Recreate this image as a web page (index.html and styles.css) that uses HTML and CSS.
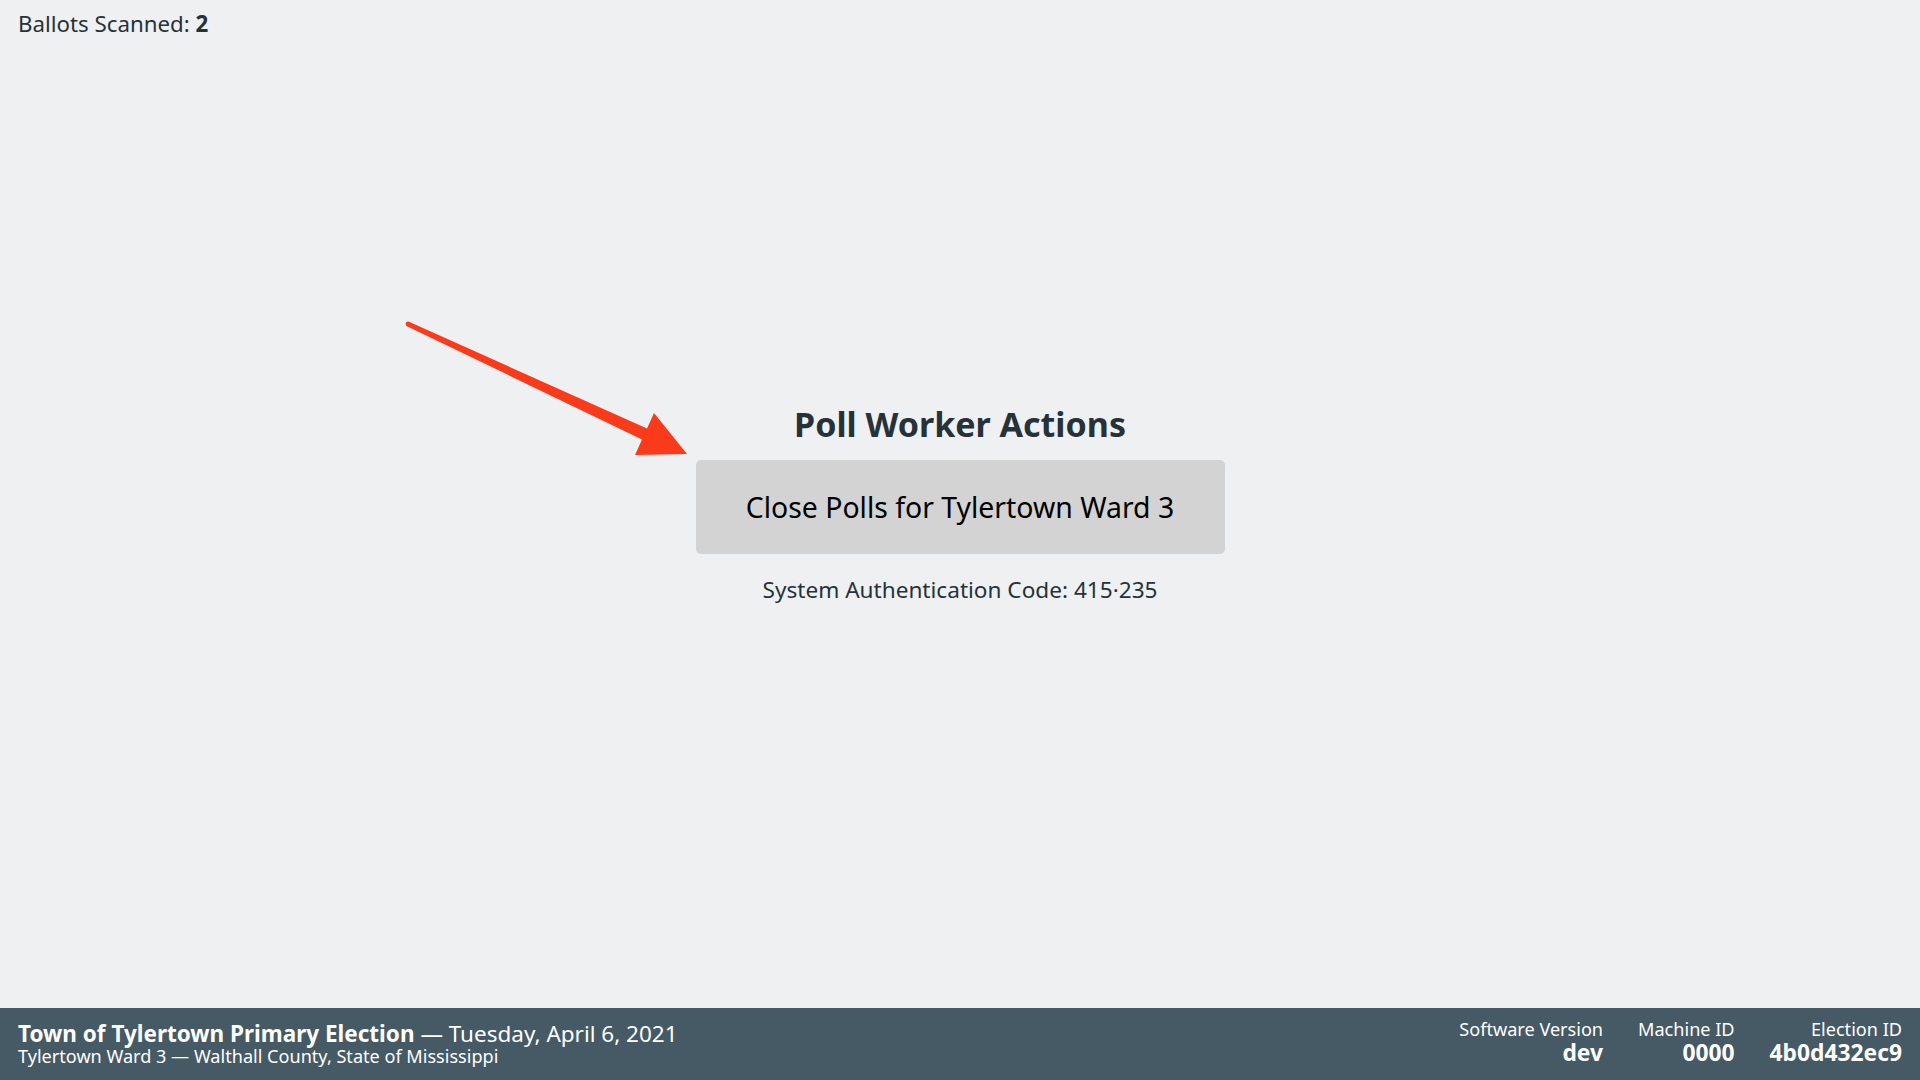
FILE: index.html
```html
<!DOCTYPE html>
<html lang="en">
<head>
<meta charset="utf-8">
<title>Poll Worker Actions</title>
<link rel="stylesheet" href="styles.css">
</head>
<body>
<div class="app">
  <main class="main">
    <div class="status">Ballots Scanned: <strong>2</strong></div>
    <section class="center">
      <h1 class="title">Poll Worker Actions</h1>
      <button class="btn" type="button">Close Polls for Tylertown Ward 3</button>
      <p class="auth">System Authentication Code: 415·235</p>
    </section>
    <div class="spacer"></div>
  </main>
  <footer class="footer">
    <div class="election">
      <div class="election-title"><strong>Town of Tylertown Primary Election</strong> — Tuesday, April 6, 2021</div>
      <div class="election-sub">Tylertown Ward 3 — Walthall County, State of Mississippi</div>
    </div>
    <div class="meta">
      <div class="meta-item"><div class="meta-label">Software Version</div><div class="meta-value">dev</div></div>
      <div class="meta-item"><div class="meta-label">Machine ID</div><div class="meta-value">0000</div></div>
      <div class="meta-item"><div class="meta-label">Election ID</div><div class="meta-value">4b0d432ec9</div></div>
    </div>
  </footer>
  <svg class="arrow" width="300" height="160" viewBox="400 310 300 160" aria-hidden="true">
    <polygon points="409,321.7 647,428.6 654,413 687,454 635,455 642,439.4 407,326.3" fill="#f93b1c"/>
    <circle cx="408" cy="324" r="2.4" fill="#f93b1c"/>
  </svg>
</div>
</body>
</html>
```
FILE: styles.css
```css
* { box-sizing: border-box; }
html, body { margin: 0; height: 100%; }
body {
  font-family: "Noto Sans", "Open Sans", sans-serif;
  background: #eff0f2;
  color: #263238;
}
.app {
  position: relative;
  display: flex;
  flex-direction: column;
  height: 100vh;
}
.main {
  flex: 1;
  display: grid;
  grid-template-rows: 48px 1fr 48px;
}
.status {
  padding: 8px 18px 0;
  font-size: 22.3px;
  line-height: 1.4;
}
.center {
  display: flex;
  flex-direction: column;
  align-items: center;
  justify-content: center;
}
.title {
  margin: 0 0 14px;
  font-size: 34px;
  font-weight: 700;
  line-height: 1.3;
}
.btn {
  width: 529px;
  height: 94px;
  background: #d3d3d3;
  border: none;
  border-radius: 5px;
  font-family: inherit;
  font-size: 28.4px;
  color: #000;
}
.auth {
  margin: 20px 0 0;
  font-size: 22.6px;
  line-height: 1.4;
}
.footer {
  height: 72px;
  background: #455a64;
  color: #fff;
  display: flex;
  justify-content: space-between;
  align-items: center;
  padding: 0 18px;
}
.election-title { font-size: 22.5px; line-height: 25px; }
.election-sub { font-size: 18.1px; line-height: 21px; }
.meta { display: flex; gap: 35px; padding-bottom: 3px; }
.meta-item { text-align: right; }
.meta-label { font-size: 18.1px; line-height: 21px; }
.meta-value { font-size: 22.8px; font-weight: 700; line-height: 26px; }
.arrow {
  position: absolute;
  left: 400px;
  top: 310px;
}
```
